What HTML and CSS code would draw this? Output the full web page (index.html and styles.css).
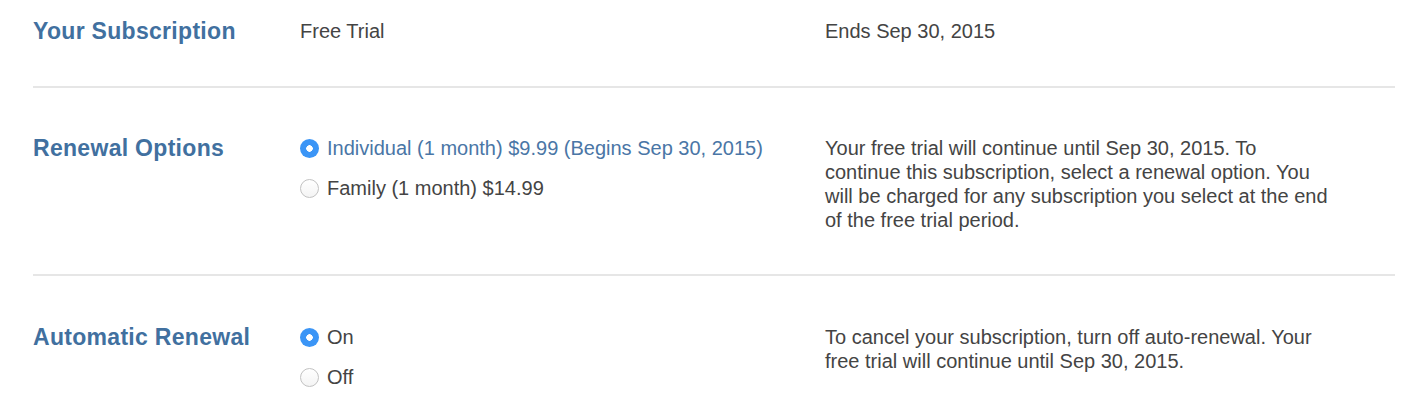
FILE: index.html
```html
<!DOCTYPE html>
<html lang="en">
<head>
    <meta charset="UTF-8">
    <title>Subscription</title>
    <link rel="stylesheet" href="styles.css">
</head>
<body>
    <div class="settings">
        <div class="row first">
            <div class="label">Your Subscription</div>
            <div class="value">Free Trial</div>
            <div class="note">Ends Sep 30, 2015</div>
        </div>
        <div class="row">
            <div class="label">Renewal Options</div>
            <div class="options">
                <label class="option selected"><input type="radio" name="plan" checked> Individual (1 month) $9.99 (Begins Sep 30, 2015)</label>
                <label class="option"><input type="radio" name="plan"> Family (1 month) $14.99</label>
            </div>
            <div class="note">Your free trial will continue until Sep 30, 2015. To<br>continue this subscription, select a renewal option. You<br>will be charged for any subscription you select at the end<br>of the free trial period.</div>
        </div>
        <div class="row last">
            <div class="label">Automatic Renewal</div>
            <div class="options">
                <label class="option"><input type="radio" name="auto" checked> On</label>
                <label class="option"><input type="radio" name="auto"> Off</label>
            </div>
            <div class="note">To cancel your subscription, turn off auto-renewal. Your<br>free trial will continue until Sep 30, 2015.</div>
        </div>
    </div>
</body>
</html>
```

FILE: styles.css
```css
body, html {
    margin: 0;
    padding: 0;
    background: #fff;
    font-family: 'Liberation Sans', Arial, sans-serif;
    color: #444;
}
.settings {
    margin: 0 13px 0 33px;
}
.row {
    display: grid;
    grid-template-columns: 267px 525px 1fr;
    align-items: start;
    padding: 48px 0 42px;
    border-bottom: 2px solid #e6e6e6;
}
.row.first {
    padding: 19px 0 43px;
}
.row.last {
    padding: 49px 0 0;
    border-bottom: none;
}
.label {
    font-size: 23px;
    line-height: 24px;
    font-weight: bold;
    letter-spacing: 0.3px;
    color: #41709f;
}
.value, .note, .option {
    font-size: 20px;
    line-height: 24px;
}
.options {
    display: flex;
    flex-direction: column;
    gap: 16px;
}
.option {
    display: flex;
    align-items: center;
    gap: 8px;
    cursor: pointer;
}
.option.selected {
    color: #4a76a6;
}
.option input {
    appearance: none;
    -webkit-appearance: none;
    margin: 0;
    width: 19px;
    height: 19px;
    border-radius: 50%;
    border: 1px solid #c2c2c2;
    background: linear-gradient(#fff, #f4f4f4);
    box-sizing: border-box;
    flex: none;
}
.option input:checked {
    border: none;
    background: radial-gradient(circle, #fff 0 3px, #3b95f6 3.5px);
}
```
